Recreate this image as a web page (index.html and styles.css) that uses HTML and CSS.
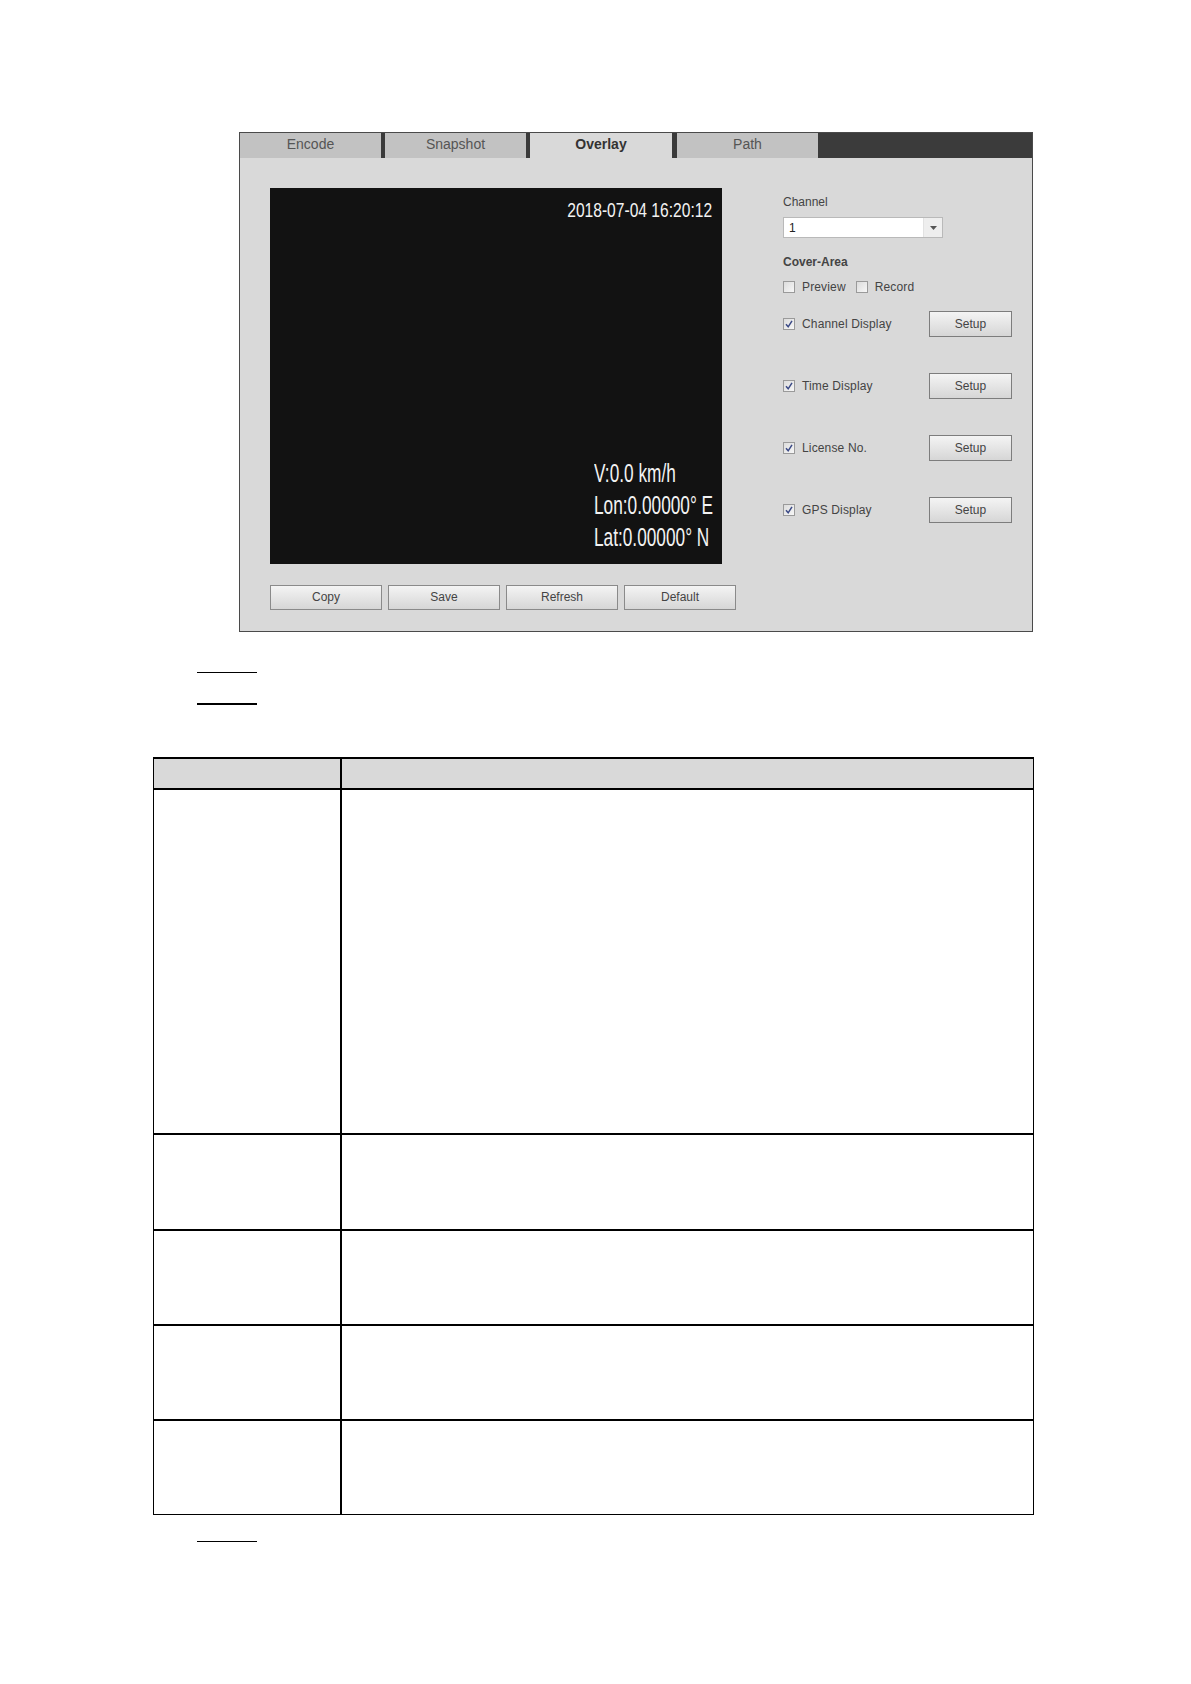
FILE: index.html
```html
<!DOCTYPE html>
<html>
<head>
<meta charset="utf-8">
<link rel="stylesheet" href="styles.css">
</head>
<body>
<div class="page">
  <div class="panel">
    <div class="tabs">
      <div class="tab">Encode</div>
      <div class="sep"></div>
      <div class="tab">Snapshot</div>
      <div class="sep"></div>
      <div class="tab active">Overlay</div>
      <div class="sep wide"></div>
      <div class="tab">Path</div>
      <div class="tab-fill"></div>
    </div>
    <div class="panel-body">
      <div class="left-col">
        <div class="video">
          <div class="stamp"><span>2018-07-04 16:20:12</span></div>
          <div class="gps">
            <span>V:0.0 km/h</span>
            <span>Lon:0.00000° E</span>
            <span>Lat:0.00000° N</span>
          </div>
        </div>
        <div class="btn-row">
          <div class="btn">Copy</div>
          <div class="btn">Save</div>
          <div class="btn">Refresh</div>
          <div class="btn">Default</div>
        </div>
      </div>
      <div class="right-col">
        <div class="lbl channel-lbl">Channel</div>
        <div class="select">
          <span class="sel-val">1</span>
          <span class="sel-arrow"><svg width="7" height="4" viewBox="0 0 7 4"><path d="M0 0H7L3.5 4Z" fill="#555"/></svg></span>
        </div>
        <div class="lbl bold cover-lbl">Cover-Area</div>
        <div class="check-line first">
          <span class="cb"></span><span class="cb-text">Preview</span>
          <span class="cb second"></span><span class="cb-text">Record</span>
        </div>
        <div class="opt-row r1">
          <span class="cb checked"><svg width="10" height="10" viewBox="0 0 10 10"><path d="M2 5.2L4.2 7.8L8 1.8" fill="none" stroke="#3b4a86" stroke-width="1.5"/></svg></span>
          <span class="cb-text">Channel Display</span>
          <div class="btn setup">Setup</div>
        </div>
        <div class="opt-row">
          <span class="cb checked"><svg width="10" height="10" viewBox="0 0 10 10"><path d="M2 5.2L4.2 7.8L8 1.8" fill="none" stroke="#3b4a86" stroke-width="1.5"/></svg></span>
          <span class="cb-text">Time Display</span>
          <div class="btn setup">Setup</div>
        </div>
        <div class="opt-row">
          <span class="cb checked"><svg width="10" height="10" viewBox="0 0 10 10"><path d="M2 5.2L4.2 7.8L8 1.8" fill="none" stroke="#3b4a86" stroke-width="1.5"/></svg></span>
          <span class="cb-text">License No.</span>
          <div class="btn setup">Setup</div>
        </div>
        <div class="opt-row">
          <span class="cb checked"><svg width="10" height="10" viewBox="0 0 10 10"><path d="M2 5.2L4.2 7.8L8 1.8" fill="none" stroke="#3b4a86" stroke-width="1.5"/></svg></span>
          <span class="cb-text">GPS Display</span>
          <div class="btn setup">Setup</div>
        </div>
      </div>
    </div>
  </div>

  <div class="uline u1"></div>
  <div class="uline u2"></div>

  <table class="params">
    <tr class="head"><th class="c1"></th><th class="c2"></th></tr>
    <tr class="r-big"><td class="c1"></td><td class="c2"></td></tr>
    <tr class="r-a"><td class="c1"></td><td class="c2"></td></tr>
    <tr class="r-b"><td class="c1"></td><td class="c2"></td></tr>
    <tr class="r-b"><td class="c1"></td><td class="c2"></td></tr>
    <tr class="r-c"><td class="c1"></td><td class="c2"></td></tr>
  </table>

  <div class="uline u3"></div>
</div>
</body>
</html>
```

FILE: styles.css
```css
html, body {
  margin: 0;
  padding: 0;
  background: #ffffff;
}
body {
  width: 1191px;
  height: 1684px;
  overflow: hidden;
  font-family: "Liberation Sans", Arial, sans-serif;
}
.page {
  padding-top: 132px;
}

/* ---------- panel ---------- */
.panel {
  margin-left: 239px;
  width: 794px;
  height: 500px;
  box-sizing: border-box;
  border: 1px solid #4a4a4a;
  background: #d9d9d9;
}
.tabs {
  display: flex;
  height: 25px;
  font-size: 14px;
}
.tab {
  width: 141px;
  background: #c2c2c2;
  color: #555;
  text-align: center;
  line-height: 22px;
}
.tab.active {
  background: #d9d9d9;
  color: #333;
  font-weight: bold;
  width: 142px;
}
.sep {
  width: 4px;
  background: #3a3a3a;
}
.sep.wide { width: 5px; }
.tab-fill {
  flex: 1;
  background: #3b3b3b;
}

.panel-body {
  display: flex;
  padding: 30px 0 0 30px;
}
.left-col {
  width: 466px;
}
.video {
  width: 452px;
  height: 376px;
  background: #121212;
  color: #f2f2f2;
  display: flex;
  flex-direction: column;
  justify-content: space-between;
  box-sizing: border-box;
  padding: 11px 10px 11px 0;
}
.stamp {
  align-self: flex-end;
  font-size: 19.5px;
  line-height: 22px;
}
.stamp span {
  display: inline-block;
  transform: scaleX(0.8);
  transform-origin: right center;
}
.gps {
  display: flex;
  flex-direction: column;
  margin-left: 324px;
  font-size: 25px;
  line-height: 32px;
}
.gps span {
  display: block;
  white-space: nowrap;
  transform: scaleX(0.69);
  transform-origin: left center;
}

.btn-row {
  display: flex;
  gap: 6px;
  margin-top: 21px;
}
.btn {
  width: 112px;
  height: 25px;
  box-sizing: border-box;
  border: 1px solid #8a8a8a;
  background: linear-gradient(#f4f4f4, #d6d6d6);
  color: #444;
  font-size: 12px;
  line-height: 23px;
  text-align: center;
}

/* ---------- right column ---------- */
.right-col {
  margin-left: 47px;
  width: 240px;
  color: #444;
  font-size: 12px;
}
.lbl {
  line-height: 14px;
}
.bold { font-weight: bold; color: #444; }
.channel-lbl { margin-top: 7px; }
.select {
  margin-top: 8px;
  width: 160px;
  height: 21px;
  box-sizing: border-box;
  border: 1px solid #b9b9b9;
  background: #ffffff;
  display: flex;
  align-items: center;
}
.sel-val {
  flex: 1;
  padding-left: 5px;
  color: #222;
}
.sel-arrow {
  width: 18px;
  height: 19px;
  background: #eeeeee;
  border-left: 1px solid #e2e2e2;
  display: flex;
  align-items: center;
  justify-content: center;
}
.cover-lbl { margin-top: 17px; }
.check-line {
  display: flex;
  align-items: center;
  height: 14px;
  margin-top: 11px;
}
.cb {
  width: 12px;
  height: 12px;
  box-sizing: border-box;
  border: 1px solid #9a9a9a;
  background: linear-gradient(135deg, #dcdcdc, #f7f7f7);
  display: inline-flex;
  align-items: center;
  justify-content: center;
  flex: none;
}
.cb.second { margin-left: 10px; }
.cb-text {
  margin-left: 7px;
  white-space: nowrap;
  letter-spacing: 0.15px;
}
.opt-row {
  display: flex;
  align-items: center;
  height: 26px;
  margin-top: 36px;
}
.opt-row.r1 { margin-top: 17px; }
.opt-row .cb-text {
  width: 127px;
}
.btn.setup {
  width: 83px;
  height: 26px;
  line-height: 24px;
  border-color: #7d7d7d;
}

/* ---------- underlines ---------- */
.uline {
  margin-left: 197px;
  width: 60px;
  border-top: 1px solid #000;
}
.u1 { margin-top: 40px; }
.u2 { margin-top: 30px; border-top-width: 2px; }
.u3 { margin-top: 26px; }

/* ---------- table ---------- */
.params {
  margin-top: 52px;
  margin-left: 153px;
  width: 881px;
  border-collapse: collapse;
  table-layout: fixed;
}
.params th, .params td {
  padding: 0;
  border: 2px solid #000;
}
.params .c1 {
  width: 186px;
  border-left-width: 1px;
}
.params .c2 {
  border-right-width: 1px;
}
.params .head th {
  background: #d9d9d9;
  height: 29px;
  border-bottom-width: 1px;
}
.r-big td { height: 343px; }
.r-a td { height: 94px; }
.r-b td { height: 93px; }
.r-c td { height: 93px; border-bottom-width: 1px; }
```
